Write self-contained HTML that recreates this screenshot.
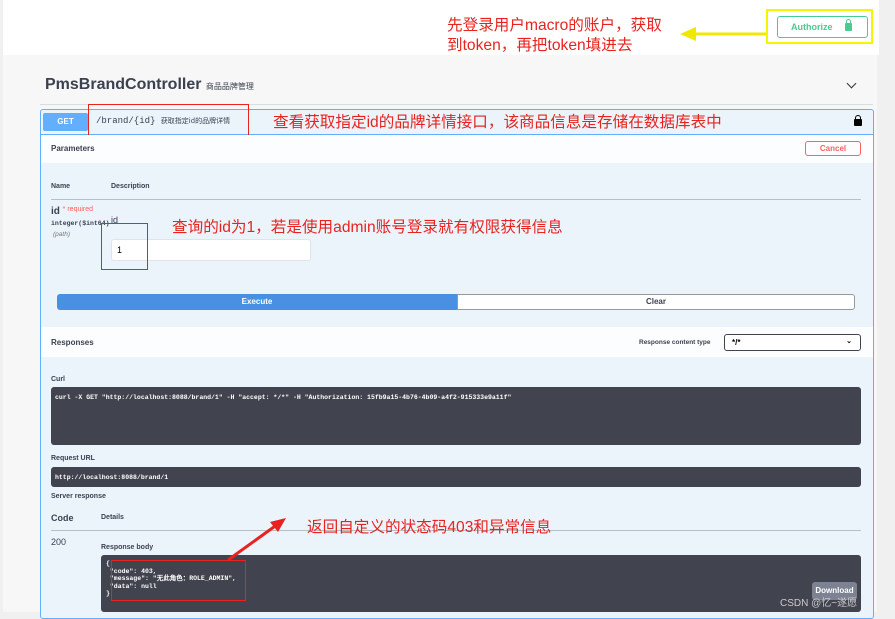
<!DOCTYPE html>
<html><head><meta charset="utf-8"><style>
*{margin:0;padding:0;box-sizing:border-box}
body{width:895px;height:612px;overflow:hidden;background:#f0f0f0;font-family:"Liberation Sans","Noto Sans CJK SC",sans-serif;position:relative}
.a{position:absolute}
.red{color:#e8231f;font-size:15.6px;font-family:"Liberation Sans","Noto Sans CJK SC",sans-serif}
.lbl{font-size:8px;font-weight:bold;color:#3b4151}
.dark{background:#41444e;border-radius:3px;color:#fff;font-family:"Liberation Mono",monospace;font-size:6.5px;font-weight:bold}
</style></head><body>
<div class="a" style="left:3px;top:0;width:876px;height:55px;background:#fff"></div>
<div class="a" style="left:3px;top:55px;width:874px;height:557px;background:#f7f7f7"></div>
<div class="a" style="left:766px;top:9px;width:107px;height:35px;border:2px solid #f5f500"></div>
<div class="a" style="left:777px;top:16px;width:91px;height:22px;border:1.5px solid #49cc90;border-radius:3px;color:#49cc90;font-size:9px;font-weight:bold;padding:5px 0 0 13px">Authorize</div>
<div class="a" style="left:845px;top:23px;width:7px;height:8px;background:#49cc90;border-radius:1px"></div>
<div class="a" style="left:846px;top:19px;width:5px;height:6px;border:1.5px solid #49cc90;border-bottom:none;border-radius:3px 3px 0 0"></div>
<svg class="a" style="left:678px;top:24px" width="90" height="20"><line x1="14" y1="10" x2="88" y2="10" stroke="#f0e800" stroke-width="3"/><polygon points="2,10 18,3 18,17" fill="#f0e800"/></svg>
<div class="a red" style="left:447px;top:16px;line-height:20px">先登录用户macro的账户，获取<br>到token，再把token填进去</div>
<div class="a" style="left:45px;top:76px;font-size:16px;font-weight:bold;color:#3b4151">PmsBrandController <span style="font-size:8px;font-weight:normal">商品品牌管理</span></div>
<div class="a" style="left:848px;top:80px;width:7px;height:7px;border-right:1.3px solid #333;border-bottom:1.3px solid #333;transform:rotate(45deg)"></div>
<div class="a" style="left:40px;top:104px;width:833px;height:1px;background:#d8dde3"></div>
<div class="a" style="left:40px;top:109px;width:834px;height:510px;background:#ebf3fb;border:1px solid #61affe;border-radius:3px"></div>
<div class="a" style="left:41px;top:134px;width:832px;height:1px;background:#61affe"></div>
<div class="a" style="left:43px;top:113px;width:45px;height:18px;background:#61affe;border-radius:2px;color:#fff;font-size:8px;font-weight:bold;text-align:center;line-height:18px">GET</div>
<div class="a" style="left:96px;top:116px;font-family:'Liberation Mono',monospace;font-size:9px;color:#3b4151">/brand/{id} <span style="font-family:'Noto Sans CJK SC';font-size:7px">获取指定id的品牌详情</span></div>
<div class="a" style="left:88px;top:104px;width:161px;height:34px;border:1.3px solid #e8231f"></div>
<div class="a red" style="left:273px;top:110px">查看获取指定id的品牌详情接口，该商品信息是存储在数据库表中</div>
<div class="a" style="left:854px;top:119px;width:8px;height:7px;background:#000;border-radius:1px"></div>
<div class="a" style="left:855px;top:115px;width:6px;height:6px;border:1.5px solid #000;border-bottom:none;border-radius:3px 3px 0 0"></div>
<div class="a" style="left:41px;top:135px;width:832px;height:28px;background:#fcfdfe"></div>
<div class="a lbl" style="left:51px;top:144px">Parameters</div>
<div class="a" style="left:805px;top:141px;width:56px;height:15px;border:1px solid #ff6060;border-radius:3px;color:#ff6060;font-size:8px;font-weight:bold;text-align:center;line-height:13px">Cancel</div>
<div class="a lbl" style="left:51px;top:183px;font-size:7px">Name</div>
<div class="a lbl" style="left:111px;top:183px;font-size:7px">Description</div>
<div class="a" style="left:51px;top:199px;width:810px;height:1px;background:#b9bec5"></div>
<div class="a" style="left:51px;top:206px;font-size:10px;font-weight:bold;color:#3b4151">id <span style="color:#ff6060;font-size:7px;font-weight:normal;vertical-align:top">* required</span></div>
<div class="a" style="left:51px;top:220px;font-size:6.5px;font-family:'Liberation Mono',monospace;font-weight:bold;color:#3b4151">integer($int64)</div>
<div class="a" style="left:53px;top:231px;font-size:6.5px;font-style:italic;color:#777">(path)</div>
<div class="a" style="left:111px;top:215px;font-size:9px;color:#3b4151">id</div>
<div class="a" style="left:111px;top:239px;width:200px;height:22px;background:#fff;border:1px solid #e0e4ea;border-radius:3px;font-size:9px;padding:5px 0 0 5px">1</div>
<div class="a" style="left:101px;top:223px;width:47px;height:47px;border:1.5px solid #e8231f"></div>
<div class="a red" style="left:172px;top:215px">查询的id为1，若是使用admin账号登录就有权限获得信息</div>
<div class="a" style="left:57px;top:294px;width:400px;height:16px;background:#4990e2;border-radius:3px 0 0 3px;color:#fff;font-size:8px;font-weight:bold;text-align:center;line-height:16px">Execute</div>
<div class="a" style="left:457px;top:294px;width:398px;height:16px;background:#fff;border:1px solid #999;border-radius:0 3px 3px 0;color:#3b4151;font-size:8px;font-weight:bold;text-align:center;line-height:14px">Clear</div>
<div class="a" style="left:41px;top:327px;width:832px;height:30px;background:#fcfdfe"></div>
<div class="a lbl" style="left:51px;top:338px">Responses</div>
<div class="a lbl" style="left:639px;top:339px;font-size:6.5px">Response content type</div>
<div class="a" style="left:724px;top:334px;width:137px;height:17px;background:#fff;border:1.3px solid #41444e;border-radius:3px;font-size:8px;padding:3px 0 0 7px;font-weight:bold">*/*<span style="position:absolute;right:8px;top:2px;font-size:7px">⌄</span></div>
<div class="a lbl" style="left:51px;top:376px;font-size:7px">Curl</div>
<div class="a dark" style="left:51px;top:387px;width:810px;height:58px;padding:7px 4px">curl -X GET "http://localhost:8088/brand/1" -H "accept: */*" -H "Authorization: 15fb9a15-4b76-4b09-a4f2-915333e9a11f"</div>
<div class="a lbl" style="left:51px;top:455px;font-size:7px">Request URL</div>
<div class="a dark" style="left:51px;top:467px;width:810px;height:20px;padding:7px 4px">http://localhost:8088/brand/1</div>
<div class="a lbl" style="left:51px;top:493px;font-size:7px">Server response</div>
<div class="a lbl" style="left:51px;top:513px;font-size:9px">Code</div>
<div class="a lbl" style="left:101px;top:514px;font-size:7px">Details</div>
<div class="a" style="left:51px;top:530px;width:810px;height:1px;background:#b9bec5"></div>
<div class="a" style="left:51px;top:537px;font-size:9px;color:#3b4151">200</div>
<div class="a lbl" style="left:101px;top:544px;font-size:7px">Response body</div>
<div class="a dark" style="left:101px;top:555px;width:760px;height:57px;padding:5px 5px;line-height:7.5px">{<br>&nbsp;"code": 403,<br>&nbsp;"message": "无此角色：ROLE_ADMIN",<br>&nbsp;"data": null<br>}</div>
<div class="a" style="left:812px;top:582px;width:45px;height:18px;background:#7d8293;border-radius:3px;color:#fff;font-size:8px;font-weight:bold;text-align:center;line-height:18px">Download</div>
<div class="a" style="left:780px;top:594px;font-size:10px;color:#ccc">CSDN @忆~遂愿</div>
<div class="a" style="left:111px;top:560px;width:135px;height:41px;border:1.3px solid #e8231f"></div>
<svg class="a" style="left:220px;top:512px" width="70" height="52"><line x1="8" y1="48" x2="58" y2="12" stroke="#e8231f" stroke-width="3"/><polygon points="66,6 50,10 58,20" fill="#e8231f"/></svg>
<div class="a red" style="left:307px;top:515px">返回自定义的状态码403和异常信息</div>
</body></html>
